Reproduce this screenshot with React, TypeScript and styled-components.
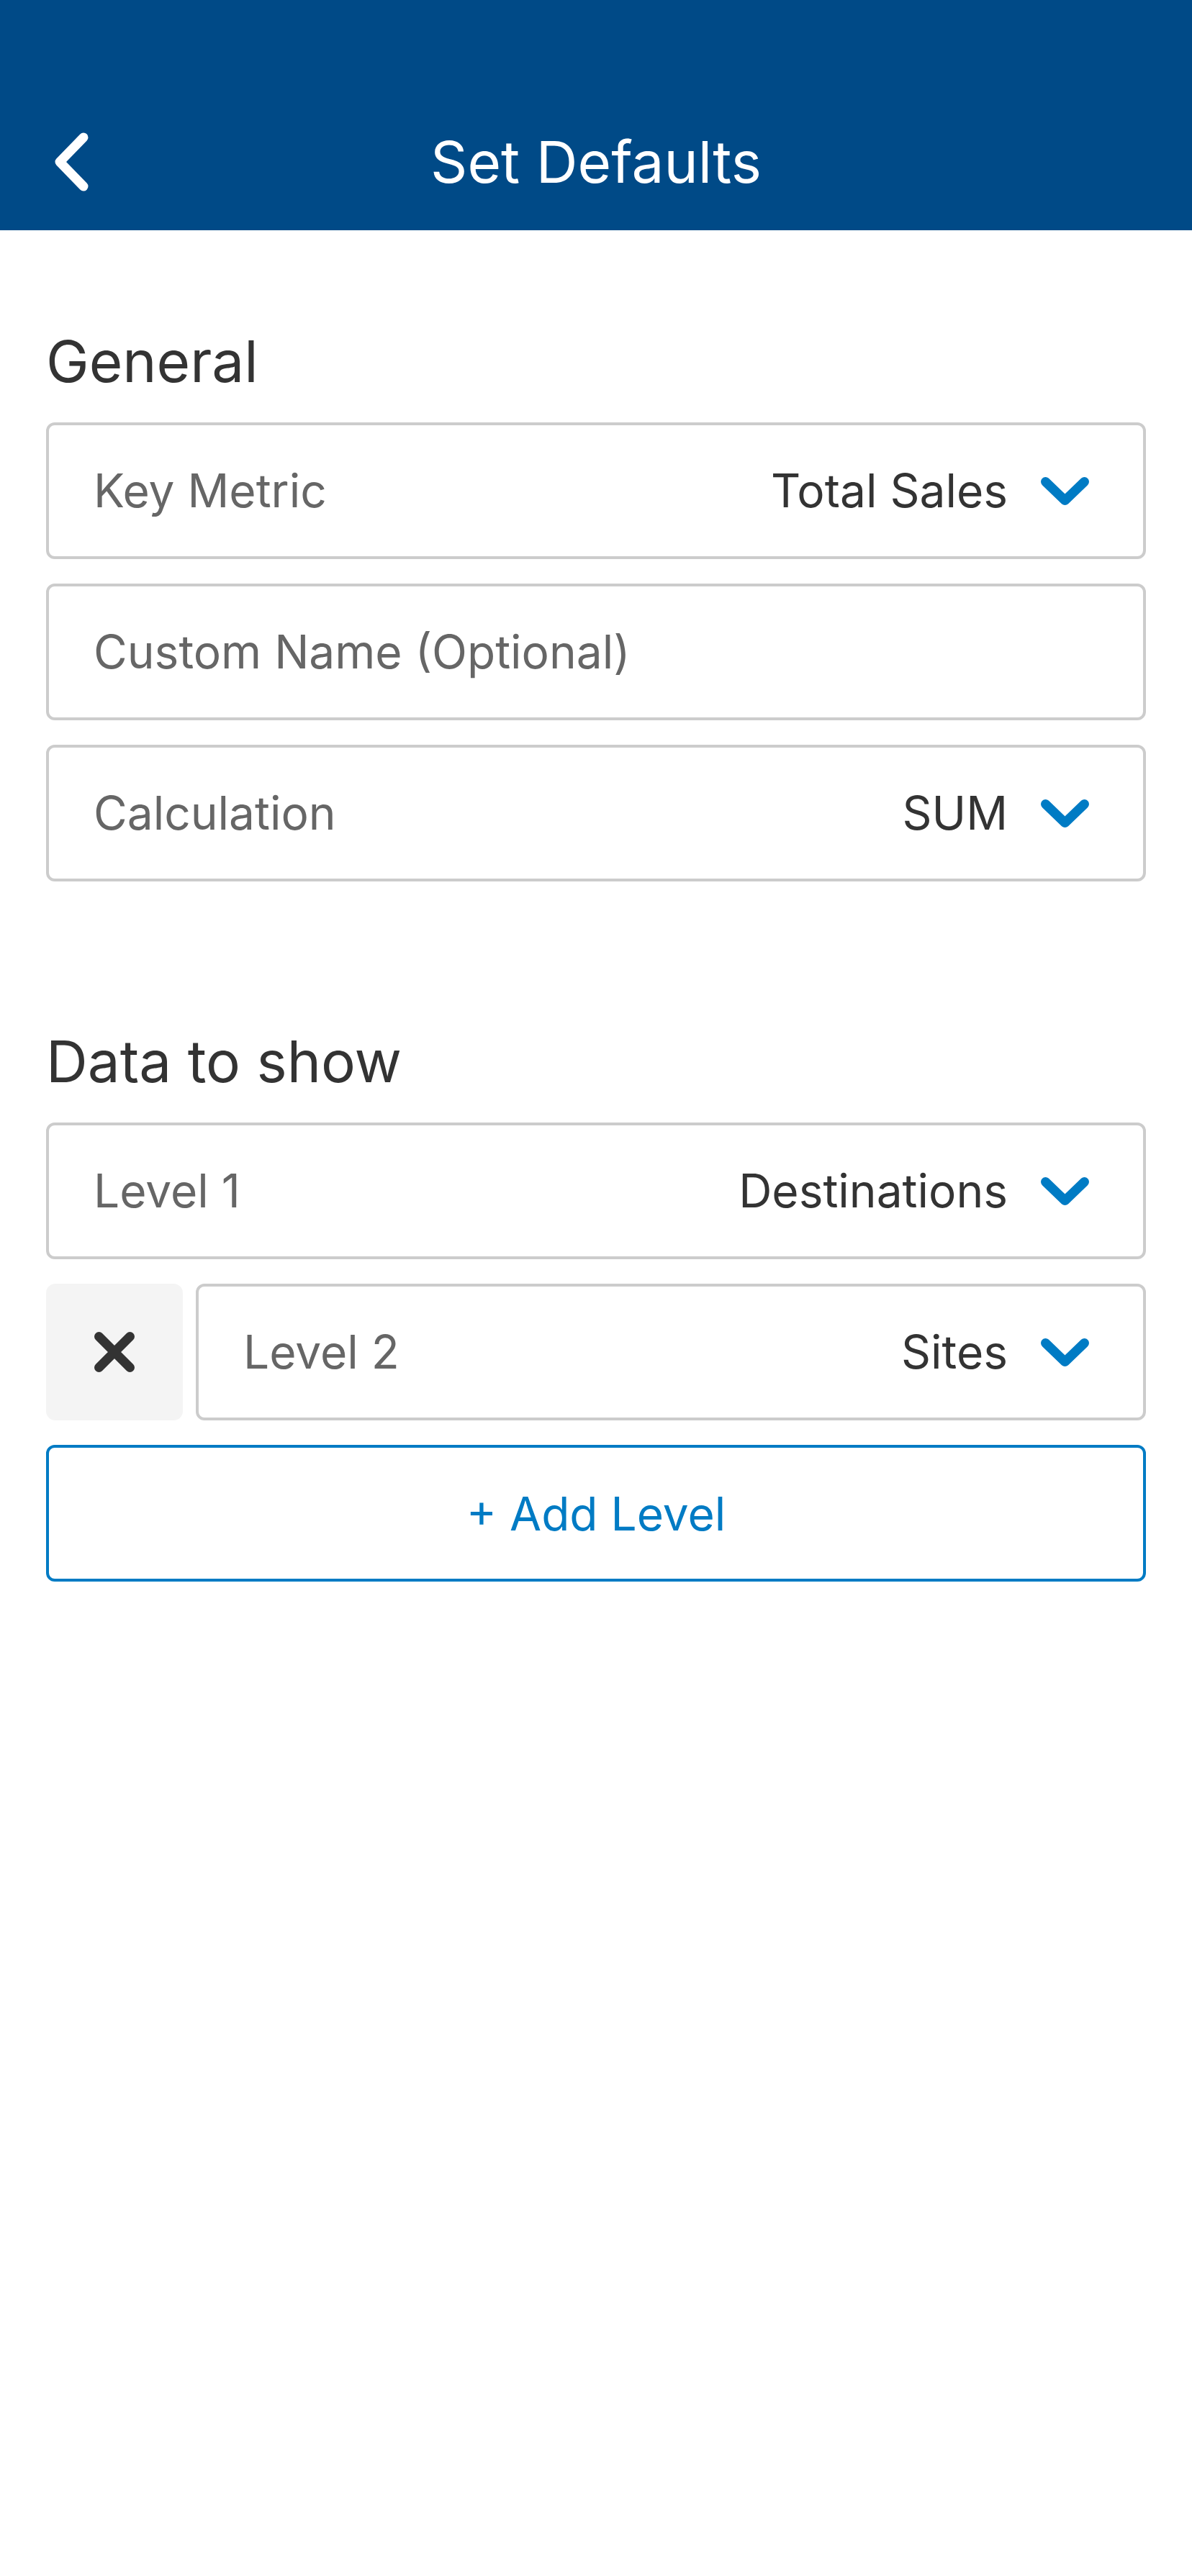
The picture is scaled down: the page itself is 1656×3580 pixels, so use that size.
import React from 'react';
import styled, { createGlobalStyle } from 'styled-components';

const GlobalStyle = createGlobalStyle`
  html, body {
    margin: 0;
    padding: 0;
    background: #ffffff;
  }
  body {
    font-family: Inter, "Noto Sans", "Liberation Sans", sans-serif;
  }
  * {
    box-sizing: border-box;
  }
`;

const Screen = styled.div`
  min-height: 3580px;
  background: #ffffff;
`;

const Header = styled.header`
  height: 320px;
  padding-top: 130px;
  background: #004a87;
`;

const Toolbar = styled.div`
  height: 190px;
  display: grid;
  grid-template-columns: 1fr auto 1fr;
  align-items: center;
`;

const BackButton = styled.button`
  justify-self: start;
  display: flex;
  align-items: center;
  padding: 0 0 0 70px;
  margin: 0;
  border: none;
  background: transparent;
  cursor: pointer;
`;

const Title = styled.h1`
  margin: 0;
  font-size: 80px;
  font-weight: 400;
  line-height: 96px;
  color: #ffffff;
`;

const Content = styled.main`
  padding: 134px 64px 0;
`;

const Section = styled.section`
  & + & {
    margin-top: 202px;
  }
`;

const SectionTitle = styled.h2`
  margin: 0 0 37px;
  font-size: 80px;
  font-weight: 400;
  line-height: 96px;
  color: #333333;
`;

const FieldList = styled.div`
  display: flex;
  flex-direction: column;
  gap: 34px;
`;

const Row = styled.div`
  display: flex;
  gap: 18px;
`;

const Field = styled.div`
  flex: 1 1 auto;
  height: 190px;
  display: flex;
  align-items: center;
  justify-content: space-between;
  padding: 0 75px 0 62px;
  border: 4px solid #cccccc;
  border-radius: 12px;
  background: #ffffff;
  font-size: 64px;
  line-height: 1;
`;

const Label = styled.span`
  color: #666666;
`;

const Value = styled.span`
  display: flex;
  align-items: center;
  gap: 46px;
  color: #333333;
`;

const RemoveButton = styled.button`
  flex: 0 0 190px;
  height: 190px;
  display: flex;
  align-items: center;
  justify-content: center;
  padding: 0;
  border: none;
  border-radius: 13px;
  background: #f4f4f4;
  cursor: pointer;
`;

const AddButton = styled.button`
  width: 100%;
  height: 190px;
  padding: 0;
  border: 4px solid #007bc4;
  border-radius: 12px;
  background: #ffffff;
  color: #007bc4;
  font-family: inherit;
  font-size: 64px;
  cursor: pointer;
`;

const BackIcon = () => (
  <svg width="60" height="90" viewBox="0 0 60 90" fill="none">
    <polyline
      points="46,11 13,45 46,79"
      stroke="#ffffff"
      strokeWidth="13"
      strokeLinecap="round"
      strokeLinejoin="round"
    />
  </svg>
);

const Chevron = () => (
  <svg width="67" height="39" viewBox="0 0 67 39" fill="none">
    <polyline
      points="6.5,6.5 33.5,32.5 60.5,6.5"
      stroke="#007bc4"
      strokeWidth="13"
      strokeLinecap="round"
      strokeLinejoin="round"
    />
  </svg>
);

const CloseIcon = () => (
  <svg width="56" height="56" viewBox="0 0 56 56" fill="none">
    <path
      d="M6.5 6.5 L49.5 49.5 M49.5 6.5 L6.5 49.5"
      stroke="#333333"
      strokeWidth="13"
      strokeLinecap="round"
    />
  </svg>
);

type SelectProps = { label: string; value?: string };

const Select = ({ label, value }: SelectProps) => (
  <Field>
    <Label>{label}</Label>
    {value && (
      <Value>
        {value}
        <Chevron />
      </Value>
    )}
  </Field>
);

const App: React.FC = () => {
  return (
    <>
      <GlobalStyle />
      <Screen>
        <Header>
          <Toolbar>
            <BackButton aria-label="Back">
              <BackIcon />
            </BackButton>
            <Title>Set Defaults</Title>
            <span />
          </Toolbar>
        </Header>
        <Content>
          <Section>
            <SectionTitle>General</SectionTitle>
            <FieldList>
              <Select label="Key Metric" value="Total Sales" />
              <Select label="Custom Name (Optional)" />
              <Select label="Calculation" value="SUM" />
            </FieldList>
          </Section>
          <Section>
            <SectionTitle>Data to show</SectionTitle>
            <FieldList>
              <Select label="Level 1" value="Destinations" />
              <Row>
                <RemoveButton aria-label="Remove level">
                  <CloseIcon />
                </RemoveButton>
                <Select label="Level 2" value="Sites" />
              </Row>
              <AddButton>+ Add Level</AddButton>
            </FieldList>
          </Section>
        </Content>
      </Screen>
    </>
  );
};

export default App;
